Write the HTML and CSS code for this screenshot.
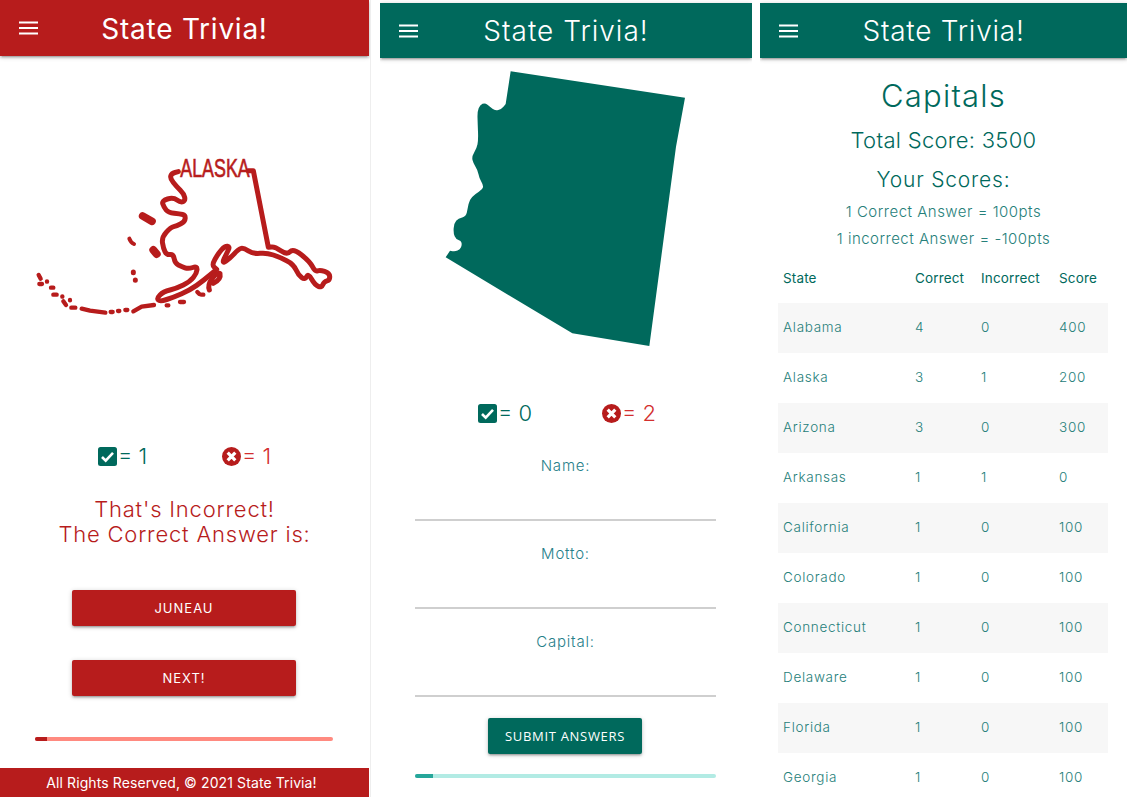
FILE: index.html
```html
<!DOCTYPE html>
<html lang="en">

<head>
    <meta charset="UTF-8">
    <meta name="viewport" content="width=device-width, initial-scale=1.0">
    <title>State Trivia!</title>
    <link rel="stylesheet" href="styles.css">
</head>

<body>
    <svg class="defs" width="0" height="0" aria-hidden="true">
        <symbol id="icon-menu" viewBox="0 0 20 14">
            <path d="M0 1.2h20M0 7h20M0 12.800h20" stroke="#fff" stroke-width="2" fill="none" />
        </symbol>
        <symbol id="icon-check" viewBox="0 0 19 19">
            <rect width="19" height="19" rx="2.500" fill="#00695c" />
            <path d="M4 10l3.700 3.600L15 5.800" stroke="#fff" stroke-width="2.600" fill="none" />
        </symbol>
        <symbol id="icon-cross" viewBox="0 0 20 20">
            <circle cx="10" cy="10" r="10" fill="#b71c1c" />
            <path d="M6 6l8 8M14 6l-8 8" stroke="#fff" stroke-width="3.400" fill="none" />
        </symbol>
    </svg>

    <main class="screens">
        <!-- Yanlis cevap ekrani -->
        <section class="panel panel-wrong">
            <header class="navbar red">
                <svg class="menu"><use href="#icon-menu" /></svg>
                <span class="brand">State Trivia!</span>
            </header>

            <svg class="alaska" viewBox="0 0 1110 660">
                <g fill="none" stroke="#b71c1c" stroke-width="15" stroke-linejoin="round" stroke-linecap="round">
                    <path d="M535 155 L525 157.500 Q515 160 512.500 167.500 Q510 175 520 187.500 Q530 200 541 211 Q552 222 554 232 Q556 242 549 245 Q542 248 531 240 Q520 232 502.500 237 Q485 242 488.500 252 Q492 262 498.500 270 Q505 278 522.500 280 Q540 282 548 283.500 Q556 285 555.500 295 Q555 305 542.500 311.500 Q530 318 521 320 Q512 322 498.500 337 Q485 352 487.500 368.500 Q490 385 495 395 Q500 405 510 403.500 Q520 402 522.500 416 Q525 430 535 435 Q545 440 555 443.500 Q565 447 578.500 442.500 Q592 438 591 449 Q590 460 580 472.500 Q570 485 550 495 Q530 505 510 510 Q490 515 480 525 Q470 535 475 540 Q480 545 500 538.500 Q520 532 545 521 Q570 510 590 496 Q610 482 630 465 L650 448 L642.500 441.500 Q635 435 645 417.500 Q655 400 665 389 Q675 378 682.500 379 Q690 380 685 390 Q680 400 672.500 416 Q665 432 677.500 423.500 Q690 415 702.500 401.500 Q715 388 722.500 385.500 Q730 383 745 392.500 Q760 402 780 400 Q800 398 820 405 Q840 412 860 422 Q880 432 887.500 448.500 Q895 465 905 472.500 Q915 480 920 470 Q925 460 935 477.500 Q945 495 955 499 Q965 503 968.500 494 Q972 485 981 482.500 Q990 480 989 469 Q988 458 974 454 Q960 450 952.500 452.500 Q945 455 937.500 440 Q930 425 905 405 Q880 385 870 395 Q860 405 842.500 392.500 Q825 380 815 381 L805 382 L760 152 L745 152" />
                    <path d="M628 510 Q622 495 636 476 Q650 458 660 460 Q664 478 640 490" />
                    <path d="M428 288 L456 304" stroke-width="23" />
                    <path d="M388 356 Q392 368 402 372" stroke-width="12" />
                    <path d="M460 390 L470 402" stroke-width="24" />
                    <path d="M400 456 V458 M406 480 V481" stroke-width="15" />
                    <path d="M116 465 L122 476 M118 492 H126 M141 484 V485 M153 503 H160 M160 524 H170 M187 529 V530 M210 540 V541 M190 544 L198 555 M214 563 H226 M245 566 L270 572 L316 578 M332 576 H338 M354 573 H358 M376 570 H382 M400 574 L425 560 L462 555" stroke-width="13" />
                    <path d="M500 556 H505 M540 546 H552 M592 516 L598 522 M605 524 H610" stroke-width="13" />
                </g>
                <text class="alaska-label" x="645" y="170" textLength="208" lengthAdjust="spacingAndGlyphs" text-anchor="middle">ALASKA</text>
            </svg>

            <div class="tally">
                <div class="stat stat-good"><svg class="stat-icon"><use href="#icon-check" /></svg>= 1</div>
                <div class="stat stat-bad"><svg class="stat-icon"><use href="#icon-cross" /></svg>= 1</div>
            </div>

            <p class="verdict">That's Incorrect!<br>The Correct Answer is:</p>

            <button class="btn-wide answer" type="button">Juneau</button>
            <button class="btn-wide next" type="button">Next!</button>

            <div class="progress progress-red"><div class="bar" style="width: 4%"></div></div>

            <footer class="footer">All Rights Reserved, © 2021 State Trivia!</footer>
        </section>

        <!-- Soru ekrani -->
        <section class="panel panel-quiz">
            <header class="navbar teal">
                <svg class="menu"><use href="#icon-menu" /></svg>
                <span class="brand">State Trivia!</span>
            </header>

            <svg class="arizona" viewBox="0 180 1125 900">
                <path fill="#00695c" d="M392 214 L915 293 L888 440 L808 1038 L577 1000 L197 772 L210 752 L217.500 753.500 Q225 755 232.500 751.500 Q240 748 243 741.500 Q246 735 244.500 728.500 Q243 722 235.500 720 Q228 718 224 709 Q220 700 221 685 Q222 670 228.500 662.500 Q235 655 246.500 652.500 Q258 650 260.500 637.500 Q263 625 265.500 612.500 Q268 600 276.500 591 Q285 582 296.500 575 Q308 568 309 561.500 Q310 555 304 545 Q298 535 295.500 522.500 Q293 510 286.500 500 Q280 490 277.500 480 Q275 470 282.500 457.500 Q290 445 292.500 432.500 Q295 420 294 395 Q293 370 292.500 352.500 Q292 335 296 325 Q300 315 307.500 311.500 Q315 308 322.500 314 Q330 320 337.500 326.500 Q345 333 355 330 Q365 327 371 319.500 L377 312 Z" />
            </svg>

            <div class="tally tally-quiz">
                <div class="stat stat-good"><svg class="stat-icon"><use href="#icon-check" /></svg>= 0</div>
                <div class="stat stat-bad"><svg class="stat-icon"><use href="#icon-cross" /></svg>= 2</div>
            </div>

            <form class="quiz-form">
                <div class="field"><label for="stateName">Name:</label></div>
                <div class="field"><label for="stateMotto">Motto:</label></div>
                <div class="field"><label for="stateCapital">Capital:</label></div>
                <button class="btn-submit" type="button">Submit Answers</button>
            </form>

            <div class="progress progress-teal"><div class="bar" style="width: 6%"></div></div>
        </section>

        <!-- Skor ekrani -->
        <section class="panel panel-scores">
            <header class="navbar teal">
                <svg class="menu"><use href="#icon-menu" /></svg>
                <span class="brand">State Trivia!</span>
            </header>

            <h1 class="score-title">Capitals</h1>
            <h2 class="score-total">Total Score: 3500</h2>
            <h3 class="score-sub">Your Scores:</h3>
            <p class="score-rule first">1 Correct Answer = 100pts</p>
            <p class="score-rule">1 incorrect Answer = -100pts</p>

            <table class="score-table">
                <thead>
                    <tr><th>State</th><th>Correct</th><th>Incorrect</th><th>Score</th></tr>
                </thead>
                <tbody>
                    <tr><td>Alabama</td><td>4</td><td>0</td><td>400</td></tr>
                    <tr><td>Alaska</td><td>3</td><td>1</td><td>200</td></tr>
                    <tr><td>Arizona</td><td>3</td><td>0</td><td>300</td></tr>
                    <tr><td>Arkansas</td><td>1</td><td>1</td><td>0</td></tr>
                    <tr><td>California</td><td>1</td><td>0</td><td>100</td></tr>
                    <tr><td>Colorado</td><td>1</td><td>0</td><td>100</td></tr>
                    <tr><td>Connecticut</td><td>1</td><td>0</td><td>100</td></tr>
                    <tr><td>Delaware</td><td>1</td><td>0</td><td>100</td></tr>
                    <tr><td>Florida</td><td>1</td><td>0</td><td>100</td></tr>
                    <tr><td>Georgia</td><td>1</td><td>0</td><td>100</td></tr>
                </tbody>
            </table>
        </section>
    </main>
</body>

</html>
```

FILE: styles.css
```css
body {
    margin: 0;
    height: 797px;
    overflow: hidden;
    background-color: #fff;
    font-family: Inter, "Open Sans", sans-serif;
    font-weight: 300;
}

.defs {
    display: block;
    height: 0;
}

.screens {
    display: flex;
    width: 1127px;
    height: 797px;
}

.panel {
    height: 797px;
    overflow: hidden;
    text-align: center;
}

.panel-wrong {
    width: 369px;
    padding-right: 1px;
    margin-right: 10px;
    box-shadow: 1px 0 0 #eee;
}

.panel-quiz {
    width: 372px;
    margin-right: 8px;
    padding-top: 3px;
    box-sizing: border-box;
}

.panel-scores {
    width: 367px;
    padding-top: 3px;
    box-sizing: border-box;
}

/* navbar */
.navbar {
    display: grid;
    grid-template-columns: 1fr auto 1fr;
    align-items: center;
    height: 55px;
    color: #fff;
    box-shadow: 0 2px 2px rgba(0, 0, 0, 0.14), 0 3px 1px -2px rgba(0, 0, 0, 0.12), 0 1px 5px rgba(0, 0, 0, 0.2);
}

.navbar.red {
    background-color: #b71c1c;
    height: 56px;
}

.navbar.teal {
    background-color: #00695c;
}

.menu {
    width: 19px;
    height: 14px;
    margin-left: 19px;
}

.brand {
    font-size: 28px;
    letter-spacing: 1px;
}

.red .brand {
    padding-top: 2px;
    font-weight: 400;
    letter-spacing: 0.75px;
}

.panel-scores .brand {
    letter-spacing: 0.75px;
}

/* maps */
.alaska {
    display: block;
    width: 370px;
    height: 220px;
    margin-top: 64px;
}

.alaska-label {
    font-family: "Liberation Sans", sans-serif;
    font-size: 78px;
    fill: #b71c1c;
    stroke: #b71c1c;
    stroke-width: 2px;
}

.arizona {
    display: block;
    width: 375px;
    height: 300px;
    margin-top: 2px;
}

/* tally */
.tally {
    display: flex;
    height: 26px;
    margin-top: 103px;
    padding-left: 98px;
}

.tally-quiz {
    margin-top: 40px;
}

.stat {
    display: flex;
    align-items: center;
    gap: 1px;
    width: 124px;
    font-size: 22px;
    line-height: 26px;
}

.stat-good {
    color: #00695c;
}

.stat-bad {
    color: #d32f2f;
}

.stat-icon {
    width: 19px;
    height: 19px;
}

.verdict {
    margin: 28px 0 0;
    font-size: 22px;
    line-height: 25px;
    letter-spacing: 0.8px;
    color: #b71c1c;
}

/* buttons */
.btn-wide {
    display: block;
    width: 224px;
    height: 36px;
    margin: 0 0 0 72px;
    padding: 0;
    border: none;
    border-radius: 2px;
    background-color: #b71c1c;
    color: #fff;
    font-family: Inter, sans-serif;
    font-size: 13px;
    font-weight: 400;
    letter-spacing: 1px;
    text-transform: uppercase;
    box-shadow: 0 2px 2px rgba(0, 0, 0, 0.14), 0 3px 1px -2px rgba(0, 0, 0, 0.12), 0 1px 5px rgba(0, 0, 0, 0.2);
}

.answer {
    margin-top: 43px;
}

.next {
    margin-top: 34px;
}

.btn-submit {
    display: block;
    width: 154px;
    height: 36px;
    margin: 21px 0 0 108px;
    padding: 0;
    border: none;
    border-radius: 2px;
    background-color: #00695c;
    color: #fff;
    font-family: "Open Sans", sans-serif;
    font-size: 13px;
    letter-spacing: 0.7px;
    text-transform: uppercase;
    box-shadow: 0 2px 2px rgba(0, 0, 0, 0.14), 0 3px 1px -2px rgba(0, 0, 0, 0.12), 0 1px 5px rgba(0, 0, 0, 0.2);
}

/* progress */
.progress {
    height: 4px;
    border-radius: 2px;
    overflow: hidden;
}

.progress .bar {
    height: 100%;
}

.progress-red {
    width: 298px;
    margin: 41px 0 0 35px;
    background-color: #ff8a80;
}

.progress-red .bar {
    background-color: #b71c1c;
}

.progress-teal {
    width: 301px;
    margin: 20px 0 0 35px;
    background-color: #b2ebe4;
}

.progress-teal .bar {
    background-color: #26a69a;
}

.footer {
    box-sizing: border-box;
    height: 29px;
    margin-top: 27px;
    padding-right: 6px;
    background-color: #b71c1c;
    color: #fff;
    font-size: 14px;
    font-weight: 400;
    letter-spacing: 0.1px;
    line-height: 30px;
}

/* form */
.quiz-form {
    margin-top: 7px;
}

.field {
    box-sizing: border-box;
    width: 301px;
    height: 88px;
    margin-left: 35px;
    padding-top: 21px;
    border-bottom: 2px solid #cfcfcf;
}

.field label {
    display: block;
    font-size: 15px;
    letter-spacing: 0.8px;
    line-height: 24px;
    color: #26808a;
}

/* scores */
.score-title,
.score-total,
.score-sub {
    margin: 0;
    font-weight: 300;
    color: #00695c;
}

.score-title {
    margin-top: 18px;
    font-size: 31px;
    letter-spacing: 1.2px;
    line-height: 40px;
}

.score-total {
    margin-top: 8px;
    font-size: 22px;
    letter-spacing: 0.3px;
    line-height: 32px;
}

.score-sub {
    margin-top: 9px;
    font-size: 21px;
    letter-spacing: 0.8px;
    line-height: 30px;
}

.score-rule {
    margin: 0;
    font-size: 15px;
    letter-spacing: 0.5px;
    line-height: 27px;
    color: #26807a;
}

.score-rule.first {
    margin-top: 3px;
}

.score-table {
    width: 330px;
    margin: 1px 0 0 18px;
    border-collapse: collapse;
    table-layout: fixed;
    text-align: left;
    font-size: 13.500px;
    color: #26807a;
}

.score-table th {
    height: 50px;
    padding: 0 0 0 5px;
    font-weight: 400;
    letter-spacing: 0.15px;
    color: #00695c;
}

.score-table td {
    height: 50px;
    padding: 0 0 2px 5px;
    box-sizing: border-box;
    letter-spacing: 0.7px;
}

.score-table th:nth-child(1) {
    width: 127px;
}

.score-table th:nth-child(2) {
    width: 61px;
}

.score-table th:nth-child(3) {
    width: 73px;
}

.score-table tbody tr:nth-child(odd) {
    background-color: #f7f7f7;
}
```
